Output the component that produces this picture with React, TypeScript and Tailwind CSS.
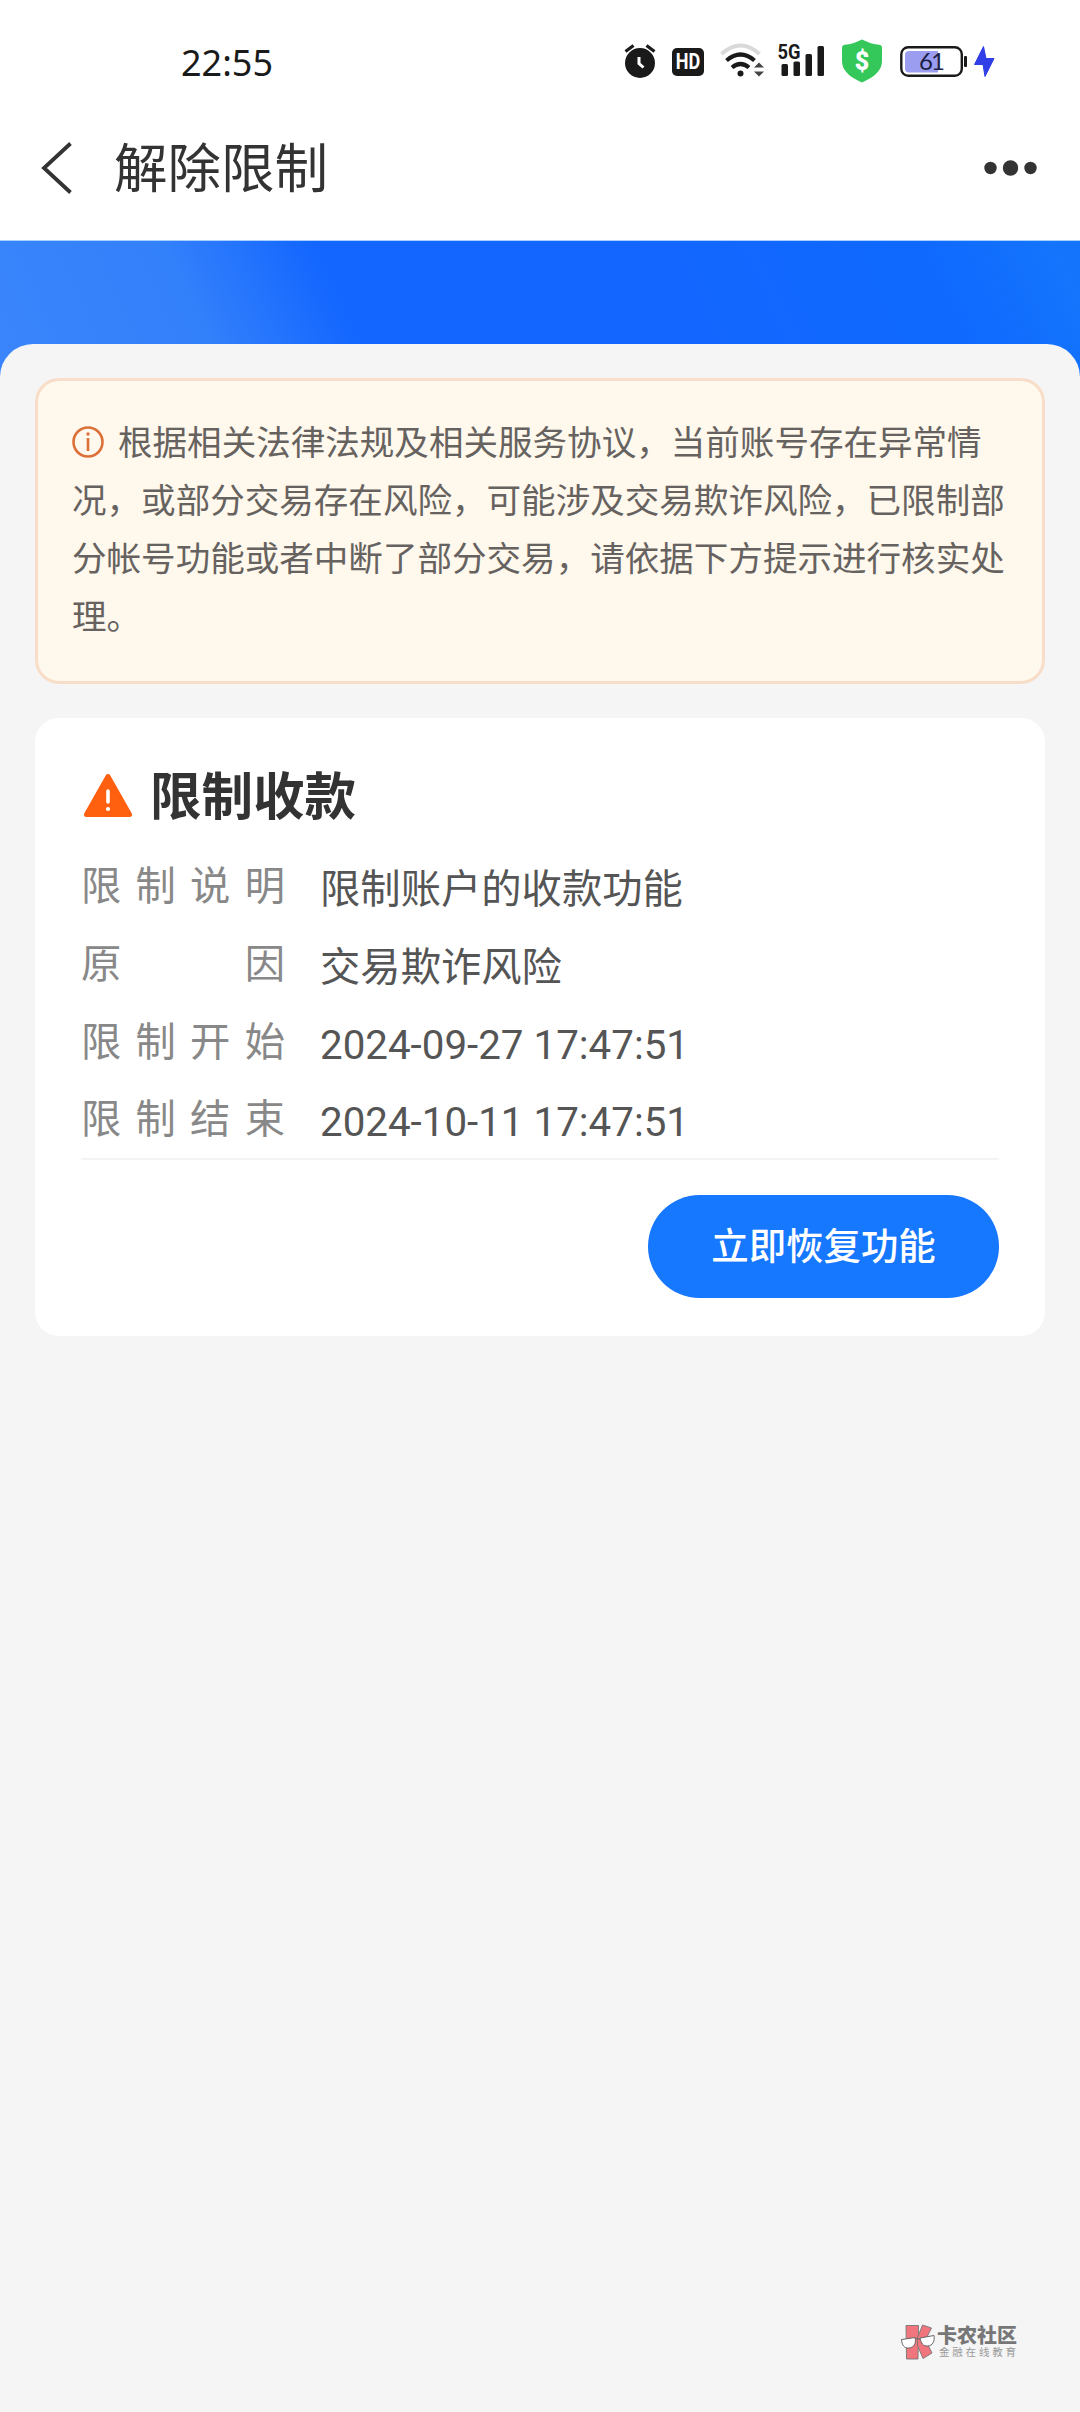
import type { ReactNode } from "react";

interface InfoRow {
  label: string;
  value: string;
}

const rows: InfoRow[] = [
  { label: "限制说明", value: "限制账户的收款功能" },
  { label: "原因", value: "交易欺诈风险" },
  { label: "限制开始", value: "2024-09-27 17:47:51" },
  { label: "限制结束", value: "2024-10-11 17:47:51" },
];

function StatusIcons() {
  return (
    <div className="flex items-center">
      {/* Alarm */}
      <svg width="34" height="40" viewBox="623 41 34 40">
        <circle cx="640" cy="63" r="15" fill="#1a1a1a" />
        <path d="M625.5 51.5l8-6M654.5 51.5l-8-6" stroke="#1a1a1a" strokeWidth="3.2" />
        <path d="M639 57v6.5l4.5 4" fill="none" stroke="#fff" strokeWidth="3" />
      </svg>

      {/* HD */}
      <div className="ml-[15px] mt-px flex h-7 w-8 items-center justify-center rounded-[5px] bg-[#1a1a1a] font-['Roboto',sans-serif] text-[22px] font-bold leading-none text-white">
        <span className="-mx-2 mt-px scale-x-[0.82]">HD</span>
      </div>

      {/* Wi-Fi */}
      <svg className="ml-[14px]" width="48" height="40" viewBox="718 41 48 40">
        <g fill="none">
          <path d="M721.5 54Q740.5 37 759.5 54" stroke="#d9d9d9" strokeWidth="4" />
          <path d="M726.5 60.5Q740.5 48.5 754.5 60.5" stroke="#1a1a1a" strokeWidth="4.2" />
          <path d="M732 67.5Q740.5 60.5 749 67.5" stroke="#1a1a1a" strokeWidth="4.2" />
        </g>
        <circle cx="740.5" cy="73.5" r="3" fill="#1a1a1a" />
        <path d="M754 67.5l5-5 5 5zM754 71.5l5 5 5-5z" fill="#444" />
      </svg>

      {/* 5G signal */}
      <svg className="ml-[10px]" width="50" height="40" viewBox="776 41 50 40">
        <text
          x="777.5"
          y="59"
          textLength="23"
          lengthAdjust="spacingAndGlyphs"
          fill="#1a1a1a"
          className="font-['Roboto',sans-serif] text-[21px] font-bold"
        >
          5G
        </text>
        <g fill="#1a1a1a">
          <rect x="781.5" y="64" width="6.5" height="12" rx="1.5" />
          <rect x="793.5" y="61.5" width="6.5" height="14.5" rx="1.5" />
          <rect x="805.5" y="54" width="6.5" height="22" rx="1.5" />
          <rect x="817.5" y="46" width="6.5" height="30" rx="1.5" />
        </g>
      </svg>

      {/* Payment shield */}
      <svg className="ml-[15px]" width="42" height="44" viewBox="841 39 42 44">
        <path
          d="M862 39.500c6 3.200 12 4.800 17 5.200 2 .2 3 1.300 3 3.300v13c0 9-7 16-20 21.500-13-5.500-20-12.500-20-21.500v-13c0-2 1-3.100 3-3.300 5-.4 11-2 17-5.200z"
          fill="#34c759"
        />
        <text
          x="862"
          y="69.5"
          textAnchor="middle"
          fill="#fff"
          className="font-['Roboto',sans-serif] text-[25px] font-black"
        >
          $
        </text>
      </svg>

      {/* Battery */}
      <svg className="ml-[16px]" width="69" height="40" viewBox="899 41 69 40">
        <rect x="901.3" y="47.2" width="60.5" height="28.6" rx="7" fill="none" stroke="#1a1a1a" strokeWidth="2.4" />
        <path d="M909 51h29v21.500h-29a4 4 0 0 1-4-4V55a4 4 0 0 1 4-4z" fill="#9a9df0" />
        <rect x="964" y="56" width="3" height="11" rx="1" fill="#1a1a1a" />
        <text
          x="931"
          y="70"
          textAnchor="middle"
          fill="#1d1d45"
          className="font-['Lato',sans-serif] text-[24px] tracking-[-2px]"
        >
          61
        </text>
      </svg>
      <svg className="ml-[5px]" width="22" height="40" viewBox="973 41 22 40">
        <path d="M983.5 46.5l-9 18h8.500l2 12 9-18h-8z" fill="#2f3ee6" stroke="#2f3ee6" strokeLinejoin="round" />
      </svg>
    </div>
  );
}

function NavBar({ children }: { children: ReactNode }) {
  return (
    <div className="flex h-36 items-center bg-white pl-10 pr-[42px]">
      <svg width="34" height="54" viewBox="0 0 34 54" fill="none">
        <path d="M30.5 2.500L4 27l26.500 24.500" stroke="#333" strokeWidth="3.8" />
      </svg>
      <h1 className="ml-10 flex-1 pt-[4px] text-[53.5px] leading-none text-[#333]">{children}</h1>
      <svg width="56" height="20" viewBox="0 0 56 20" fill="#333">
        <circle cx="8.5" cy="10" r="6.2" />
        <circle cx="28.5" cy="10" r="7.7" />
        <circle cx="48.5" cy="10" r="6.2" />
      </svg>
    </div>
  );
}

function Notice() {
  return (
    <div className="h-[306px] rounded-[24px] border-[3px] border-[#f8ddc8] bg-[#fff8ec] px-[34px] pt-[34px]">
      <p className="text-[34.56px] leading-[57.9px] text-[#666260]">
        <svg className="mr-[14px] inline-block align-[-3px]" width="32" height="32" viewBox="0 0 32 32" fill="none">
          <circle cx="16" cy="16" r="14.5" stroke="#dc7038" strokeWidth="2.6" />
          <path d="M16 12v13" stroke="#dc7038" strokeWidth="2.6" />
          <circle cx="16" cy="8" r="1.7" fill="#dc7038" />
        </svg>
        根据相关法律法规及相关服务协议，当前账号存在异常情况，或部分交易存在风险，可能涉及交易欺诈风险，已限制部分帐号功能或者中断了部分交易，请依据下方提示进行核实处理。
      </p>
    </div>
  );
}

function LimitCard() {
  return (
    <div className="mt-[34px] h-[618px] rounded-[24px] bg-white px-[46px] pt-[44px]">
      <div className="flex h-[68px] items-center">
        <svg className="ml-[2px]" width="50" height="46" viewBox="0 0 50 46">
          <path
            d="M25 3.500L46.500 41.500H3.500z"
            fill="#ff6010"
            stroke="#ff6010"
            strokeWidth="5"
            strokeLinejoin="round"
          />
          <path d="M25 18v11" stroke="#fff" strokeWidth="3.6" strokeLinecap="round" />
          <circle cx="25" cy="36" r="2.1" fill="#fff" />
        </svg>
        <h2 className="ml-[17px] pt-[3px] text-[51.5px] font-bold leading-none text-[#333]">限制收款</h2>
      </div>

      <dl className="mt-[21px] h-[309px] border-b-2 border-[#f4f4f4]">
        {rows.map((row) => (
          <div key={row.label} className="flex h-[77.8px] items-start pt-[19px] text-[40.32px] leading-none">
            <dt className="flex w-[204px] -translate-y-[3.5px] justify-between text-[#888]">
              {row.label.split("").map((char) => (
                <span key={char}>{char}</span>
              ))}
            </dt>
            <dd className="ml-[35px] text-[#555]">{row.value}</dd>
          </div>
        ))}
      </dl>

      <div className="mt-[35px] flex justify-end">
        <button className="h-[103px] w-[351px] rounded-full bg-[#1677ff] pt-[3px] text-[37.44px] font-medium leading-none text-white">
          立即恢复功能
        </button>
      </div>
    </div>
  );
}

function Watermark() {
  return (
    <div className="absolute bottom-[51px] right-[62px] flex items-center whitespace-nowrap">
      <svg width="36" height="38" viewBox="0 0 36 38">
        <g fill="#f0757c" stroke="#777" strokeWidth="0.9">
          <path d="M6 2.500h12.500L18 36H6.500z" />
          <path d="M22.5 2l9 3-6 12 6.500 13-9 5.500-5.500-13v-8z" />
        </g>
        <path
          d="M1.5 16.500l13.500-2c1.500 6-1 10-6 10.500s-7-3-7.500-8.500zM20 15l14-2.500c1 6-1.500 10-6 10.500-5 .5-7-3-8-8z"
          fill="#fff"
          stroke="#666"
        />
        <path d="M15 15.500l5 .5" stroke="#666" />
      </svg>
      <div className="ml-px w-[81px]">
        <div className="text-[20px] font-black leading-[22px] text-[#777]">卡农社区</div>
        <div className="pl-[2px] text-[10.5px] leading-[12px] tracking-[2.8px] text-[#999]">金融在线教育</div>
      </div>
    </div>
  );
}

export default function App() {
  return (
    <div className="relative flex h-[2412px] w-[1080px] flex-col overflow-hidden bg-[#f5f5f5] font-['Roboto','Noto_Sans_CJK_SC',sans-serif]">
      <div className="flex h-24 items-start justify-between bg-white pl-[181px] pr-[85px] pt-[39px]">
        <span className="mt-[6px] font-['Noto_Sans',sans-serif] text-[36px] leading-[36px] text-[#1a1a1a]">22:55</span>
        <StatusIcons />
      </div>
      <NavBar>解除限制</NavBar>

      <div className="h-[140px] border-t border-[#a9d0fb] bg-[linear-gradient(65deg,#3a85fb_0%,#3380fb_20%,#1366ff_33%,#1366ff_60%,#0f69ff_86%,#1475fc_98%)]" />
      <main className="-mt-9 flex-1 rounded-t-[33px] bg-[#f5f5f5] px-[35px] pt-[34px]">
        <Notice />
        <LimitCard />
      </main>
      <Watermark />
    </div>
  );
}
